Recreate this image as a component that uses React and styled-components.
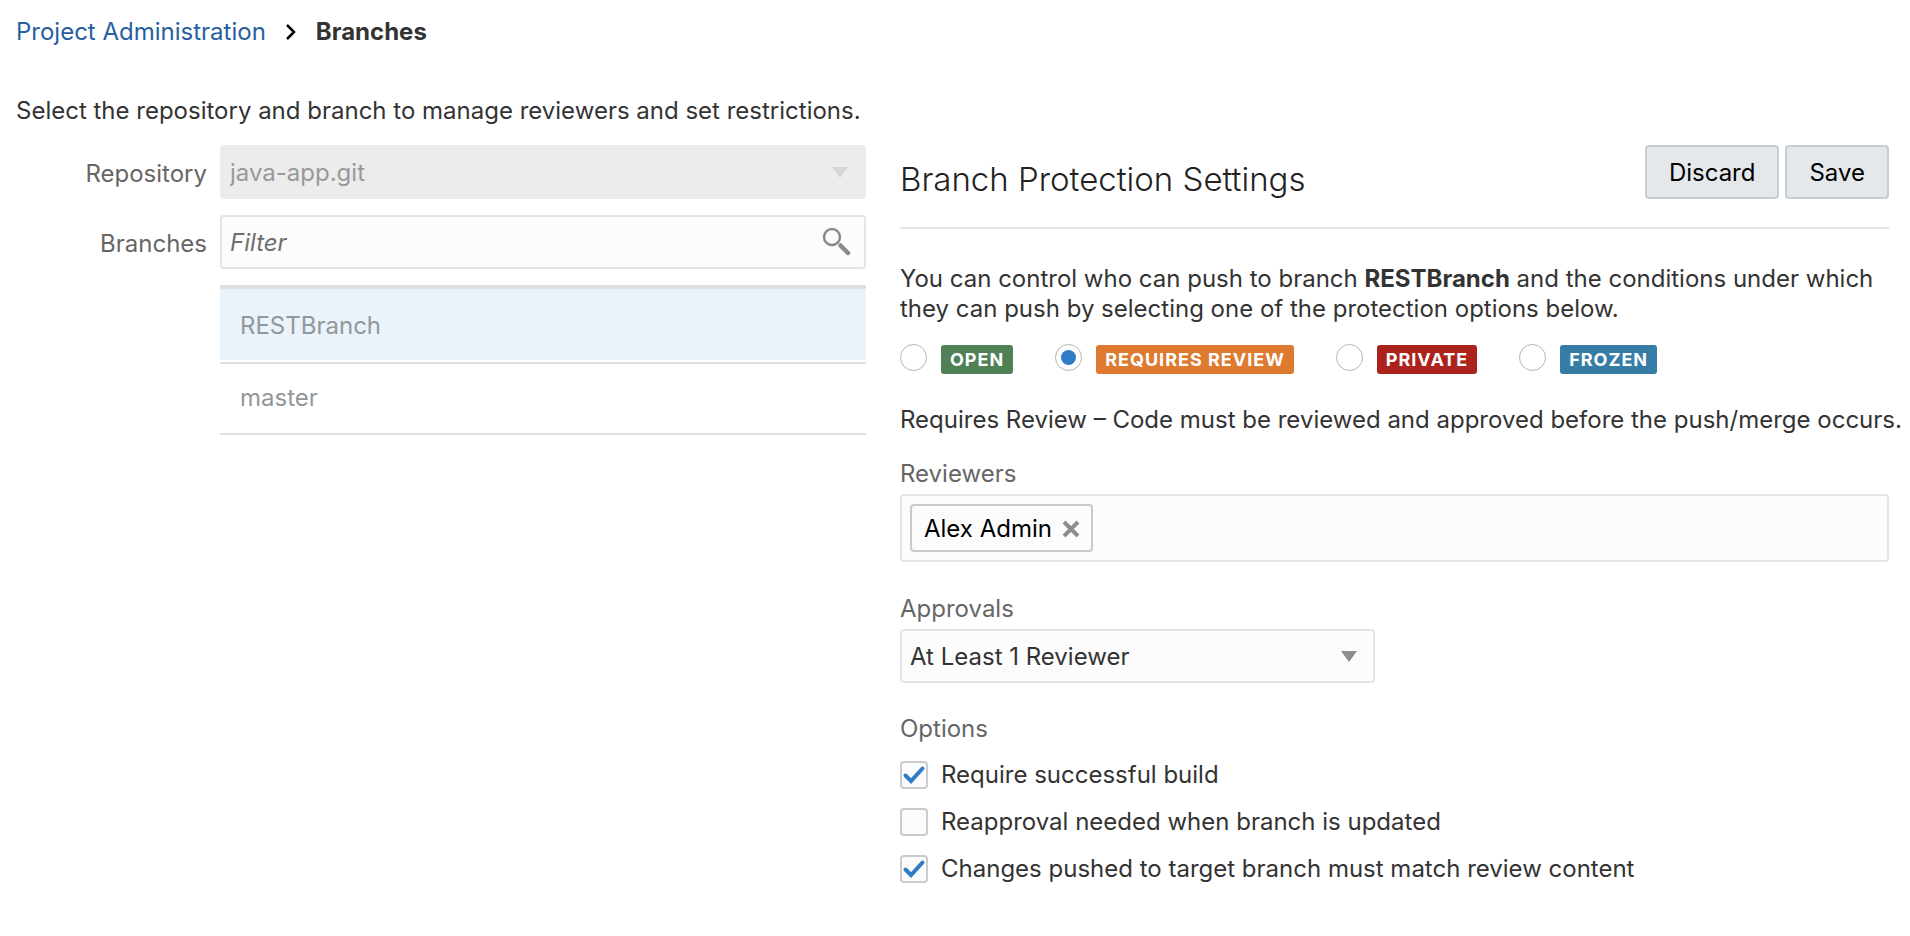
import { useState } from 'react'
import styled, { createGlobalStyle } from 'styled-components'

const PROTECTIONS = [
  { id: 'open', label: 'OPEN', color: '#4f8056' },
  { id: 'review', label: 'REQUIRES REVIEW', color: '#dd7a2f' },
  { id: 'private', label: 'PRIVATE', color: '#ab231c' },
  { id: 'frozen', label: 'FROZEN', color: '#367da6' },
]

const OPTIONS = [
  { id: 'build', label: 'Require successful build', checked: true },
  { id: 'reapproval', label: 'Reapproval needed when branch is updated', checked: false },
  { id: 'match', label: 'Changes pushed to target branch must match review content', checked: true },
]

function Arrow() {
  return (
    <ArrowIcon viewBox="0 0 16 11" aria-hidden="true">
      <path d="M0 0H16L8 11Z" />
    </ArrowIcon>
  )
}

function Option({ id, label, checked }) {
  const [value, setValue] = useState(checked)

  return (
    <OptionLabel htmlFor={id}>
      <CheckWrap>
        <CheckInput
          id={id}
          type="checkbox"
          checked={value}
          onChange={(e) => setValue(e.target.checked)}
        />
        {value && (
          <CheckIcon viewBox="0 0 28 28" aria-hidden="true">
            <path d="M5.5 14.5L11 20L22.5 7.5" />
          </CheckIcon>
        )}
      </CheckWrap>
      {label}
    </OptionLabel>
  )
}

function App() {
  const [protection, setProtection] = useState('review')

  return (
    <>
      <GlobalStyle />
      <Page>
        <Breadcrumb aria-label="Breadcrumb">
          <a href="#administration">Project Administration</a>
          <Chevron viewBox="0 0 10 16" aria-hidden="true">
            <path d="M1 1L8 8L1 15" />
          </Chevron>
          <strong>Branches</strong>
        </Breadcrumb>
        <Intro>Select the repository and branch to manage reviewers and set restrictions.</Intro>

        <Columns>
          <Picker>
            <PickerLabel htmlFor="repository">Repository</PickerLabel>
            <SelectWrap $disabled>
              <Select id="repository" disabled>
                <option>java-app.git</option>
              </Select>
              <Arrow />
            </SelectWrap>
            <PickerLabel htmlFor="filter">Branches</PickerLabel>
            <FilterWrap>
              <FilterInput id="filter" type="text" placeholder="Filter" />
              <SearchIcon viewBox="0 0 30 30" aria-hidden="true">
                <circle cx="10" cy="10" r="8" strokeWidth="2.5" />
                <path d="M18.5 18.5L26 26" strokeWidth="4.5" />
              </SearchIcon>
            </FilterWrap>
            <BranchList>
              <Branch $selected>RESTBranch</Branch>
              <Branch>master</Branch>
            </BranchList>
          </Picker>

          <Settings>
            <SettingsHeader>
              <Title>Branch Protection Settings</Title>
              <Buttons>
                <Button type="button">Discard</Button>
                <Button type="button">Save</Button>
              </Buttons>
            </SettingsHeader>
            <Text>
              You can control who can push to branch <strong>RESTBranch</strong> and the conditions
              under which they can push by selecting one of the protection options below.
            </Text>
            <Radios role="radiogroup" aria-label="Protection">
              {PROTECTIONS.map(({ id, label, color }) => (
                <RadioLabel key={id}>
                  <RadioInput
                    type="radio"
                    name="protection"
                    checked={protection === id}
                    onChange={() => setProtection(id)}
                  />
                  <Badge $color={color}>{label}</Badge>
                </RadioLabel>
              ))}
            </Radios>
            <Description>
              Requires Review – Code must be reviewed and approved before the push/merge occurs.
            </Description>

            <Field>
              <FieldLabel htmlFor="reviewers">Reviewers</FieldLabel>
              <TagBox>
                <Tag>
                  Alex Admin
                  <RemoveButton type="button" aria-label="Remove Alex Admin">
                    <svg viewBox="0 0 18 18" aria-hidden="true">
                      <path d="M2 2L16 16M16 2L2 16" />
                    </svg>
                  </RemoveButton>
                </Tag>
                <TagInput id="reviewers" type="text" />
              </TagBox>
            </Field>

            <Field>
              <FieldLabel htmlFor="approvals">Approvals</FieldLabel>
              <ApprovalsWrap>
                <Select id="approvals">
                  <option>At Least 1 Reviewer</option>
                </Select>
                <Arrow />
              </ApprovalsWrap>
            </Field>

            <Options>
              <legend>Options</legend>
              {OPTIONS.map((option) => (
                <Option key={option.id} {...option} />
              ))}
            </Options>
          </Settings>
        </Columns>
      </Page>
    </>
  )
}

export default App

const GlobalStyle = createGlobalStyle`
  * {
    box-sizing: border-box;
  }
  body {
    margin: 0;
    background: #fff;
  }
  body, button, input, select {
    font-family: Inter, "Liberation Sans", sans-serif;
    font-size: 24px;
    line-height: 30px;
    color: #333;
  }
`
const Page = styled.main`
  padding: 17px 21px 16px 16px;
`
const Breadcrumb = styled.nav`
  display: flex;
  align-items: center;
  gap: 20px;

  a {
    color: #26609f;
    text-decoration: none;
  }
`
const Chevron = styled.svg`
  width: 10px;
  height: 16px;
  fill: none;
  stroke: #000;
  stroke-width: 2.5;
`
const Intro = styled.p`
  margin: 49px 0 19px;
`
const Columns = styled.div`
  display: grid;
  grid-template-columns: minmax(0, 850fr) minmax(0, 989fr);
  column-gap: 34px;
  align-items: start;
`
const Picker = styled.div`
  display: grid;
  grid-template-columns: 191px minmax(0, 1fr);
  column-gap: 13px;
  row-gap: 16px;
  align-items: center;
`
const PickerLabel = styled.label`
  padding-top: 4px;
  text-align: right;
  color: #666;
`
const SelectWrap = styled.div`
  display: grid;
  align-items: center;
  height: 54px;
  border: 2px solid ${({ $disabled }) => ($disabled ? '#ececec' : '#e4e4e4')};
  border-radius: 4px;
  background: ${({ $disabled }) => ($disabled ? '#ececec' : '#fcfcfc')};
  fill: ${({ $disabled }) => ($disabled ? '#d4d6d7' : '#8b8e90')};
`
const ApprovalsWrap = styled(SelectWrap)`
  width: 48%;
`
const Select = styled.select`
  grid-area: 1 / 1;
  width: 100%;
  height: 50px;
  padding: 2px 40px 0 8px;
  border: 0;
  background: none;
  appearance: none;

  &:disabled {
    color: #999;
    opacity: 1;
  }
`
const ArrowIcon = styled.svg`
  grid-area: 1 / 1;
  justify-self: end;
  width: 16px;
  height: 11px;
  margin-right: 16px;
  pointer-events: none;
`
const FilterWrap = styled.div`
  display: flex;
  align-items: center;
  height: 54px;
  padding: 0 12px 0 8px;
  border: 2px solid #e4e4e4;
  border-radius: 4px;
  background: #fcfcfc;
`
const FilterInput = styled.input`
  flex: 1;
  min-width: 0;
  padding: 2px 0 0;
  border: 0;
  outline: 0;
  background: none;

  &::placeholder {
    color: #6e6e6e;
    font-style: italic;
  }
`
const SearchIcon = styled.svg`
  width: 30px;
  height: 30px;
  fill: none;
  stroke: #878b8f;
  stroke-linecap: round;
`
const BranchList = styled.ul`
  grid-column: 2;
  margin: 0;
  padding: 0;
  border-top: 4px solid #dfe1e1;
  list-style: none;
`
const Branch = styled.li`
  padding: ${({ $selected }) => ($selected ? '22px 20px 21px' : '19px 20px 20px')};
  border-bottom: 2px solid #dedfdf;
  color: #949799;
  background: ${({ $selected }) => ($selected ? '#eaf2fa' : '#fff')};
  box-shadow: ${({ $selected }) => ($selected ? 'inset 0 -2px #fff' : 'none')};
`
const Settings = styled.section`
  display: flex;
  flex-direction: column;
`
const SettingsHeader = styled.header`
  display: flex;
  align-items: flex-start;
  justify-content: space-between;
  height: 84px;
  border-bottom: 2px solid #e4e4e4;
`
const Title = styled.h1`
  margin: 14px 0 0;
  font-size: 33px;
  line-height: 40px;
  font-weight: 300;
  color: #222;
`
const Buttons = styled.div`
  display: flex;
  gap: 6px;
`
const Button = styled.button`
  height: 54px;
  padding: 2px 22px 0;
  border: 2px solid #c4ced7;
  border-radius: 4px;
  background: #e4e8ea;
  color: #000;
`
const Text = styled.p`
  margin: 35px 0 0;
`
const Description = styled(Text)`
  margin-top: 31px;
  white-space: nowrap;
`
const Radios = styled.div`
  display: flex;
  flex-wrap: wrap;
  gap: 42px;
  margin-top: 20px;
`
const RadioLabel = styled.label`
  display: flex;
  align-items: flex-end;
  gap: 14px;
  height: 30px;
`
const RadioInput = styled.input`
  display: grid;
  place-items: center;
  align-self: flex-start;
  width: 27px;
  height: 27px;
  margin: 0;
  border: 1px solid #b4b4b4;
  border-radius: 50%;
  background: #fff;
  appearance: none;

  &:checked::before {
    content: '';
    width: 15px;
    height: 15px;
    border-radius: 50%;
    background: #307bc5;
  }
`
const Badge = styled.span`
  padding: 0 9px;
  border-radius: 3px;
  background: ${({ $color }) => $color};
  color: #fff;
  font-size: 18px;
  line-height: 29px;
  font-weight: 700;
  letter-spacing: 1px;
`
const Field = styled.div`
  margin-top: 24px;

  & + & {
    margin-top: 32px;
  }
`
const FieldLabel = styled.label`
  display: block;
  margin-bottom: 5px;
  color: #666;
`
const TagBox = styled.div`
  display: flex;
  align-items: center;
  padding: 8px;
  border: 2px solid #e4e4e4;
  border-radius: 4px;
  background: #fcfcfc;
`
const Tag = styled.span`
  display: flex;
  align-items: center;
  gap: 10px;
  height: 48px;
  padding: 2px 11px 0 12px;
  border: 2px solid #c9c9c9;
  border-radius: 4px;
  color: #000;
`
const RemoveButton = styled.button`
  display: flex;
  padding: 0;
  border: 0;
  background: none;

  svg {
    width: 18px;
    height: 18px;
    stroke: #8a8d91;
    stroke-width: 4;
  }
`
const TagInput = styled.input`
  flex: 1;
  min-width: 0;
  border: 0;
  outline: 0;
  background: none;
`
const Options = styled.fieldset`
  display: flex;
  flex-direction: column;
  gap: 17px;
  min-width: 0;
  margin: 31px 0 0;
  padding: 0;
  border: 0;

  legend {
    margin-bottom: 16px;
    padding: 0;
    color: #666;
  }
`
const OptionLabel = styled.label`
  display: flex;
  align-items: center;
  gap: 13px;
`
const CheckWrap = styled.span`
  display: grid;
  flex: none;
`
const CheckInput = styled.input`
  grid-area: 1 / 1;
  width: 28px;
  height: 28px;
  margin: 0;
  border: 2px solid #cbcbcb;
  border-radius: 4px;
  background: #fcfcfc;
  appearance: none;
`
const CheckIcon = styled.svg`
  grid-area: 1 / 1;
  width: 28px;
  height: 28px;
  fill: none;
  stroke: #307bc5;
  stroke-width: 4;
  stroke-linecap: round;
  pointer-events: none;
`
